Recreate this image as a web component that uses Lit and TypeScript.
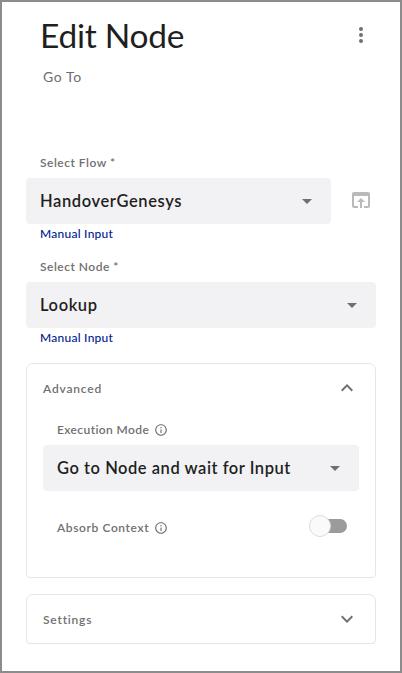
import { LitElement, html, css, svg } from "lit";
import { customElement, property } from "lit/decorators.js";

const base = css`
  :host {
    display: block;
    box-sizing: border-box;
    font-family: Lato, "Noto Sans", sans-serif;
    color: #1f1f1f;
  }
  *, *::before, *::after {
    box-sizing: border-box;
  }
  svg {
    display: block;
    flex: none;
  }
`;

const infoIcon = svg`<svg width="14" height="14" viewBox="0 0 24 24" fill="#707070"><path d="M11 7h2v2h-2zm0 4h2v6h-2zm1-9C6.48 2 2 6.48 2 12s4.48 10 10 10 10-4.48 10-10S17.52 2 12 2zm0 18c-4.41 0-8-3.59-8-8s3.59-8 8-8 8 3.59 8 8-3.59 8-8 8z"/></svg>`;

@customElement("select-box")
export class SelectBox extends LitElement {
  @property() value = "";
  @property({ type: Number }) spacing = 0;

  static styles = [base, css`
    .box {
      display: flex;
      align-items: center;
      justify-content: space-between;
      height: 46px;
      padding: 0 19px 0 14px;
      border-radius: 4px;
      background: #f2f2f4;
    }
    .value {
      padding-top: 1px;
      font-size: 16.5px;
      font-weight: 600;
      line-height: 21px;
      white-space: nowrap;
    }
  `];

  render() {
    return html`<div class="box">
      <span class="value" style="letter-spacing:${this.spacing}px">${this.value}</span>
      <svg width="10" height="5" viewBox="0 0 10 5"><path d="M0 0h10L5 5z" fill="#6f6f6f"/></svg>
    </div>`;
  }
}

@customElement("app-root")
export class AppRoot extends LitElement {
  static styles = [base, css`
    :host {
      height: 673px;
      padding: 13px 24px 0;
      border: 2px solid #8c8c8c;
      background: #fff;
    }
    .header {
      display: flex;
      justify-content: space-between;
      align-items: center;
      height: 40px;
      padding: 0 13px 0 14px;
    }
    .title {
      margin: 0;
      font-size: 33.5px;
      font-weight: 400;
      line-height: 40px;
      letter-spacing: -0.25px;
      white-space: nowrap;
    }
    .subtitle {
      height: 20px;
      margin: 12px 0 0 17px;
      font-size: 14px;
      line-height: 20px;
      letter-spacing: 0.6px;
      color: #6d6d72;
    }
    .label {
      display: flex;
      align-items: center;
      gap: 5px;
      height: 16px;
      padding-left: 14px;
      font-size: 12px;
      font-weight: 600;
      line-height: 16px;
      letter-spacing: 0.5px;
      color: #707070;
      white-space: nowrap;
    }
    .field {
      margin-bottom: 17px;
    }
    .field .label {
      margin-bottom: 7px;
    }
    .first {
      margin-top: 68px;
    }
    .row {
      display: flex;
      align-items: center;
      gap: 21px;
      padding-right: 6px;
    }
    .row select-box {
      flex: 1;
    }
    .row > svg {
      margin-bottom: 2px;
    }
    .link {
      display: block;
      height: 16px;
      margin: 2px 0 0 14px;
      font-size: 12px;
      font-weight: 500;
      line-height: 16px;
      letter-spacing: 0.25px;
      color: #00218f;
    }
    .panel {
      border: 1px solid #e6e6e6;
      border-radius: 7px 7px 4px 4px;
    }
    .advanced {
      height: 215px;
      margin-bottom: 16px;
    }
    .bar {
      display: flex;
      align-items: center;
      justify-content: space-between;
      height: 48px;
      padding: 0 22px 0 2px;
    }
    .bar .label {
      padding-top: 2px;
      letter-spacing: 0.8px;
    }
    .content {
      padding: 10px 16px 0;
    }
    .content > .label {
      margin-bottom: 7px;
      letter-spacing: 0.4px;
    }
    .switch-row {
      display: flex;
      align-items: center;
      justify-content: space-between;
      height: 22px;
      margin-top: 24px;
      padding-right: 12px;
    }
    .switch-row .label {
      height: 19px;
      padding-top: 3px;
      letter-spacing: 0.6px;
    }
    .switch {
      display: flex;
      align-items: center;
      width: 36px;
      height: 14px;
      border-radius: 7px;
      background: #9b9b9b;
    }
    .knob {
      flex: none;
      width: 22px;
      height: 22px;
      margin-left: -2px;
      border: 1px solid #dcdcdc;
      border-radius: 50%;
      background: #fafafa;
    }
  `];

  private chevron(d: string) {
    return html`<svg width="12" height="8" viewBox="0 0 12 8"><path d=${d} fill="none" stroke="#707070" stroke-width="2"/></svg>`;
  }

  render() {
    return html`
      <div class="header">
        <h1 class="title">Edit Node</h1>
        <svg width="4" height="16" viewBox="0 0 4 16" fill="#707070"><circle cx="2" cy="2" r="2"/><circle cx="2" cy="8" r="2"/><circle cx="2" cy="14" r="2"/></svg>
      </div>
      <div class="subtitle">Go To</div>
      <div class="field first">
        <div class="label">Select Flow *</div>
        <div class="row">
          <select-box value="HandoverGenesys" spacing="0.6"></select-box>
          <svg width="18" height="16" viewBox="0 0 18 16" fill="#bababa"><path d="M16 0H2C.9 0 0 .9 0 2v12c0 1.100.9 2 2 2h4v-2H2V4h14v10h-4v2h4c1.100 0 2-.9 2-2V2c0-1.100-.9-2-2-2zM9 6l-4 4h3v6h2v-6h3z"/></svg>
        </div>
        <a class="link">Manual Input</a>
      </div>
      <div class="field">
        <div class="label">Select Node *</div>
        <select-box value="Lookup" spacing="0.6"></select-box>
        <a class="link">Manual Input</a>
      </div>
      <div class="panel advanced">
        <div class="bar">
          <span class="label">Advanced</span>
          ${this.chevron("M.7 6.700 6 1.400l5.300 5.300")}
        </div>
        <div class="content">
          <div class="label">Execution Mode ${infoIcon}</div>
          <select-box value="Go to Node and wait for Input" spacing="0.53"></select-box>
          <div class="switch-row">
            <div class="label">Absorb Context ${infoIcon}</div>
            <div class="switch"><span class="knob"></span></div>
          </div>
        </div>
      </div>
      <div class="panel">
        <div class="bar">
          <span class="label">Settings</span>
          ${this.chevron("M.7 1.300 6 6.600l5.300-5.300")}
        </div>
      </div>
    `;
  }
}
